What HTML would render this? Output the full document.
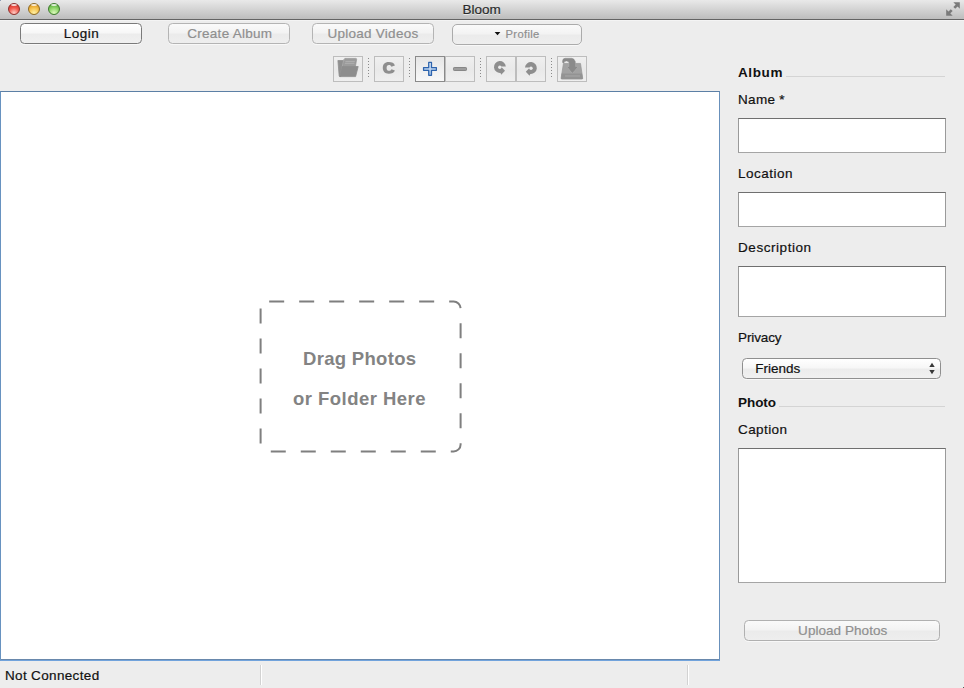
<!DOCTYPE html><html><head><meta charset="utf-8"><style>
*{margin:0;padding:0}
html,body{width:964px;height:688px;overflow:hidden;background:#ededed;position:relative;font-family:"Liberation Sans",sans-serif}
.t{position:absolute;white-space:nowrap;-webkit-text-stroke:0.2px currentColor}
.btn{position:absolute;box-sizing:border-box;border-radius:4.5px;border:1px solid #8c8c8c;
 background:linear-gradient(#ffffff 0%,#f7f7f7 45%,#ececec 55%,#f0f0f0 100%);box-shadow:0 1px 0 rgba(255,255,255,.6)}
.btn.dis{border-color:#b4b4b4;background:linear-gradient(#fafafa 0%,#f3f3f3 45%,#ebebeb 55%,#eeeeee 100%)}
.tb{position:absolute;box-sizing:border-box;border:1px solid #bdbdbd;background:linear-gradient(#f0f0f0,#e9e9e9 50%,#efefef)}
.field{position:absolute;box-sizing:border-box;background:#fff;border:1px solid #9a9a9a;border-top-color:#6f6f6f;border-bottom-color:#a5a5a5}
.sep{position:absolute;width:1px;background:repeating-linear-gradient(#8a8a8a 0,#8a8a8a 1px,transparent 1px,transparent 3px)}
</style></head><body>
<div style="position:absolute;left:0;top:0;width:964px;height:19px;background:linear-gradient(#e9e9e9,#d3d3d3 50%,#bdbdbd)"></div>
<div style="position:absolute;left:0;top:19px;width:964px;height:1px;background:#646464"></div>
<div style="position:absolute;left:0;top:20px;width:964px;height:1px;background:#f4f4f4"></div>
<div style="position:absolute;left:8px;top:3px;width:12px;height:12px;border-radius:50%;box-sizing:border-box;border:1px solid #8e2e2a;background:radial-gradient(circle at 50% 90%,#ffd0c8 0%,#f25a4e 50%,#d83a30 80%,#8e2e2a 100%)"></div>
<div style="position:absolute;left:11px;top:4px;width:6px;height:2px;border-radius:50%;background:rgba(255,255,255,.8)"></div>
<div style="position:absolute;left:28px;top:3px;width:12px;height:12px;border-radius:50%;box-sizing:border-box;border:1px solid #8e6a22;background:radial-gradient(circle at 50% 90%,#fff2a8 0%,#f6c24c 50%,#e09c26 80%,#8e6a22 100%)"></div>
<div style="position:absolute;left:31px;top:4px;width:6px;height:2px;border-radius:50%;background:rgba(255,255,255,.8)"></div>
<div style="position:absolute;left:48px;top:3px;width:12px;height:12px;border-radius:50%;box-sizing:border-box;border:1px solid #3d7a2c;background:radial-gradient(circle at 50% 90%,#e0fac0 0%,#8ed66a 50%,#62b244 80%,#3d7a2c 100%)"></div>
<div style="position:absolute;left:51px;top:4px;width:6px;height:2px;border-radius:50%;background:rgba(255,255,255,.8)"></div>
<div class="t" style="left:281.7px;width:400px;text-align:center;top:2.57px;font-size:13.5px;line-height:13.5px;color:#2a2a2a;font-weight:400;letter-spacing:0px;text-shadow:0 1px 0 rgba(255,255,255,.6)">Bloom</div>
<svg style="position:absolute;left:944px;top:0" width="20" height="19" viewBox="0 0 20 19">
<g fill="#7a7a7a"><path d="M9.3 2.2H15.8V8.7Z"/><path d="M2.2 9.2V15.7H8.7Z"/></g>
<g stroke="#7a7a7a" stroke-width="2.6"><path d="M13.2 5L10.3 7.9"/><path d="M5 12.9L7.7 10.2"/></g></svg>
<div class="btn" style="left:20px;top:23px;width:122px;height:21px;border-color:#7a7a7a"></div>
<div class="t" style="left:-118.5px;width:400px;text-align:center;top:26.57px;font-size:13.5px;line-height:13.5px;color:#111;font-weight:400;letter-spacing:0.45px;">Login</div>
<div class="btn dis" style="left:168px;top:23px;width:122px;height:21px"></div>
<div class="t" style="left:29.80000000000001px;width:400px;text-align:center;top:26.57px;font-size:13.5px;line-height:13.5px;color:#8f8f8f;font-weight:400;letter-spacing:0.27px;">Create Album</div>
<div class="btn dis" style="left:312px;top:23px;width:122px;height:21px"></div>
<div class="t" style="left:173px;width:400px;text-align:center;top:26.57px;font-size:13.5px;line-height:13.5px;color:#8f8f8f;font-weight:400;letter-spacing:0.25px;">Upload Videos</div>
<div class="btn dis" style="left:452px;top:24px;width:130px;height:21px;border-color:#ababab;border-radius:5px"></div>
<svg style="position:absolute;left:494px;top:31px" width="7" height="6"><path d="M0.6 1h5.8l-2.9 3.3z" fill="#111"/></svg>
<div class="t" style="left:505.5px;top:29.12px;font-size:11.2px;line-height:11.2px;color:#8f8f8f;font-weight:400;letter-spacing:0.35px;">Profile</div>
<div class="tb" style="left:333px;top:56px;width:30px;height:26px;"></div>
<div class="tb" style="left:374px;top:56px;width:30px;height:26px;"></div>
<div class="tb" style="left:415px;top:56px;width:30px;height:26px;border-color:#8a8a8a;background:linear-gradient(#e6e6e6,#f1f1f1 60%,#f8f8f8);z-index:2"></div>
<div class="tb" style="left:445px;top:56px;width:30px;height:26px;"></div>
<div class="tb" style="left:486px;top:56px;width:30px;height:26px;"></div>
<div class="tb" style="left:516px;top:56px;width:30px;height:26px;"></div>
<div class="tb" style="left:557px;top:56px;width:30px;height:26px;"></div>
<div class="sep" style="left:368px;top:58px;height:20px"></div>
<div class="sep" style="left:409px;top:58px;height:20px"></div>
<div class="sep" style="left:480px;top:58px;height:20px"></div>
<div class="sep" style="left:551px;top:58px;height:20px"></div>
<svg style="position:absolute;left:333px;top:55px" width="30" height="27" viewBox="0 0 30 27">
<path d="M4.9 5.5H11L8 21.5H6.7Q6.3 21.5 6.2 21Z" fill="#8f8f8f" stroke="#8f8f8f" stroke-width="0.8" stroke-linejoin="round"/>
<path d="M11.8 3.4H22.8Q23.8 3.4 23.6 4.5L22.4 11.5H9.8Z" fill="#9c9c9c" stroke="#939393" stroke-width="0.7" stroke-linejoin="round"/>
<path d="M12.4 6.4H21.8M11.9 8.3H21.4" stroke="#b2b2b2" stroke-width="0.9"/>
<path d="M10.9 4.2L7.2 20.8" stroke="#a8a8a8" stroke-width="1"/>
<path d="M9.2 11.5H25.2L22.6 21.6H6.8Z" fill="#8d8d8d" stroke="#8d8d8d" stroke-width="0.8" stroke-linejoin="round"/>
</svg>
<svg style="position:absolute;left:374px;top:55px" width="30" height="27" viewBox="0 0 30 27">
<path d="M20.9 10.4C20 7.8 18 6.9 14.85 6.9C10.5 6.9 8.8 9.5 8.8 12.85C8.8 16.2 10.5 18.8 14.85 18.8C18 18.8 20 17.9 20.9 15.5L17.4 14.2C17 15.3 16.2 15.8 15 15.8C13.4 15.8 12.6 14.5 12.6 12.9C12.6 11.3 13.4 10 15 10C16.2 10 17 10.5 17.4 11.7Z" fill="#8e8e8e"/></svg>
<svg style="position:absolute;left:415px;top:55px;z-index:3" width="31" height="27" viewBox="0 0 31 27">
<defs><linearGradient id="pg" x1="0" y1="0" x2="0" y2="1"><stop offset="0" stop-color="#dbe9f8"/><stop offset="1" stop-color="#9fc0e8"/></linearGradient></defs>
<path d="M13.7 7.4H16.5V12.5H21.4V15.3H16.5V20.3H13.7V15.3H8.55V12.5H13.7Z" fill="url(#pg)" stroke="#2d63ad" stroke-width="1.25" stroke-linejoin="round"/>
</svg>
<div style="position:absolute;left:453px;top:67px;width:14px;height:4px;border-radius:1.2px;box-sizing:border-box;border:1px solid #878787;background:#9d9d9d"></div>
<svg style="position:absolute;left:486px;top:55px" width="60" height="27" viewBox="0 0 60 27">
<g transform="translate(13.9,11.9)"><path d="M5.93 -0.41 A5.95 5.95 0 1 0 0.65 6.0 L1.3 7.75 L5.1 3.75 L1.0 -0.35 Z" fill="#8e8e8e"/>
<circle cx="-0.1" cy="0.3" r="1.7" fill="#ececec"/></g>
<g transform="translate(44.9,12.9) scale(-1,1)"><path d="M5.93 -0.41 A5.95 5.95 0 1 0 0.65 6.0 L1.3 7.75 L5.1 3.75 L1.0 -0.35 Z" fill="#8e8e8e"/>
<circle cx="-0.1" cy="0.3" r="1.7" fill="#ececec"/></g>
</svg>
<svg style="position:absolute;left:556px;top:55px" width="32" height="27" viewBox="0 0 32 27">
<path d="M7.46 8.44H24.5L26.7 23.2Q26.8 24.1 25.9 24.1H5.9Q5 24.1 5.1 23.2Z" fill="#a2a2a2" stroke="#959595" stroke-width="0.7" stroke-linejoin="round"/>
<path d="M5.6 18.6H26L26.7 23.2Q26.8 24.1 25.9 24.1H5.9Q5 24.1 5.1 23.2Z" fill="#939393"/>
<path d="M9 21H24" stroke="#a8a8a8" stroke-width="1"/>
<path d="M7.1 8.3C6 7 6.5 3.3 9 3.3L15.8 3.3Q18 3.3 19.3 6.5L19.3 11.8L21.9 11.8L16.4 18.1L11.1 11.8L13.2 11.8L13.2 8Q12.6 5.9 10.4 5.9Q8.3 5.9 7.6 8.3Z" fill="#8a8a8a" stroke="#b2b2b2" stroke-width="0.8" stroke-linejoin="round" style="paint-order:stroke"/>
</svg>
<div style="position:absolute;left:0;top:91px;width:720px;height:570px;box-sizing:border-box;background:#fff;border:1px solid #6792c0;border-right-color:#6890bb;border-top-color:#5c7fa5;border-bottom:2px solid #71a3dc"></div>
<div style="position:absolute;left:1px;top:659px;width:718px;height:1px;background:#6988ac"></div>
<svg style="position:absolute;left:0;top:0" width="720" height="660">
<path d="M260.6 308.5 V444.4 A7 7 0 0 0 267.6 451.4 H453.6 A7 7 0 0 0 460.6 444.4 V308.5 A7 7 0 0 0 453.6 301.5 H267.6 A7 7 0 0 0 260.6 308.5 Z" fill="none" stroke="#7f7f7f" stroke-width="2" stroke-dasharray="15 15"/>
</svg>
<div class="t" style="left:159.7px;width:400px;text-align:center;top:350.34px;font-size:18.5px;line-height:18.5px;color:#838383;font-weight:700;letter-spacing:0.3px;-webkit-text-stroke:0;">Drag Photos</div>
<div class="t" style="left:159.5px;width:400px;text-align:center;top:389.64px;font-size:18.5px;line-height:18.5px;color:#838383;font-weight:700;letter-spacing:0.47px;-webkit-text-stroke:0;">or Folder Here</div>
<div style="position:absolute;left:0;top:0;width:1px;height:1px;background:#8d9cb3"></div>
<div style="position:absolute;left:963px;top:687px;width:1px;height:1px;background:#5a5a5a"></div>
<div class="t" style="left:5px;top:668.57px;font-size:13.5px;line-height:13.5px;color:#111;font-weight:400;letter-spacing:0.34px;">Not Connected</div>
<div style="position:absolute;left:260px;top:665px;width:1px;height:20px;background:#d2d2d2"></div>
<div style="position:absolute;left:261px;top:665px;width:1px;height:20px;background:#fff"></div>
<div style="position:absolute;left:687px;top:665px;width:1px;height:20px;background:#d2d2d2"></div>
<div style="position:absolute;left:688px;top:665px;width:1px;height:20px;background:#fff"></div>
<div class="t" style="left:738px;top:65.57px;font-size:13.5px;line-height:13.5px;color:#111;font-weight:700;letter-spacing:0.62px;-webkit-text-stroke:0;">Album</div>
<div style="position:absolute;left:786px;top:76px;width:159px;height:1px;background:#d4d4d4"></div>
<div class="t" style="left:738px;top:92.57px;font-size:13.5px;line-height:13.5px;color:#111;font-weight:400;letter-spacing:0.32px;">Name *</div>
<div class="field" style="left:738px;top:118px;width:208px;height:35px"></div>
<div class="t" style="left:738px;top:166.87px;font-size:13.5px;line-height:13.5px;color:#111;font-weight:400;letter-spacing:0.5px;">Location</div>
<div class="field" style="left:738px;top:192px;width:208px;height:35px"></div>
<div class="t" style="left:738px;top:241.07px;font-size:13.5px;line-height:13.5px;color:#111;font-weight:400;letter-spacing:0.56px;">Description</div>
<div class="field" style="left:738px;top:266px;width:208px;height:51px"></div>
<div class="t" style="left:738px;top:330.57px;font-size:13.5px;line-height:13.5px;color:#111;font-weight:400;letter-spacing:-0.12px;">Privacy</div>
<div class="btn" style="left:742px;top:358px;width:199px;height:21px;border-color:#8f8f8f"></div>
<div class="t" style="left:755.3px;top:362.17px;font-size:13.5px;line-height:13.5px;color:#111;font-weight:400;letter-spacing:0.0px;">Friends</div>
<svg style="position:absolute;left:927.6px;top:362px" width="8" height="13"><path d="M4 0.8l2.7 4.2h-5.4z M4 12.2l2.7-4.2h-5.4z" fill="#383838"/></svg>
<div class="t" style="left:738px;top:395.57px;font-size:13.5px;line-height:13.5px;color:#111;font-weight:700;letter-spacing:-0.05px;-webkit-text-stroke:0;">Photo</div>
<div style="position:absolute;left:779px;top:406px;width:166px;height:1px;background:#d4d4d4"></div>
<div class="t" style="left:738px;top:423.07px;font-size:13.5px;line-height:13.5px;color:#111;font-weight:400;letter-spacing:0.42px;">Caption</div>
<div class="field" style="left:738px;top:448px;width:208px;height:135px"></div>
<div class="btn dis" style="left:744px;top:620px;width:196px;height:21px;border-color:#b0b0b0"></div>
<div class="t" style="left:642.7px;width:400px;text-align:center;top:623.57px;font-size:13.5px;line-height:13.5px;color:#8f8f8f;font-weight:400;letter-spacing:0.05px;">Upload Photos</div>
</body></html>
